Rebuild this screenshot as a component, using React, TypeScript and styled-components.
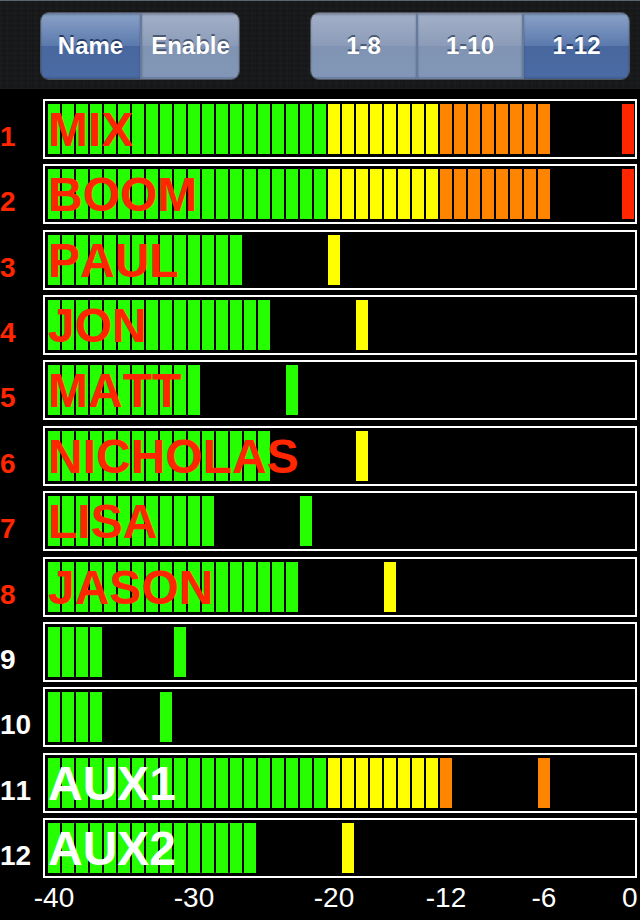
import React, { useState } from "react";
import styled, { createGlobalStyle } from "styled-components";

const GlobalStyle = createGlobalStyle`
  *, *::before, *::after { box-sizing: border-box; }
  body {
    margin: 0;
    background: #000;
    color: #fff;
    font-family: "Liberation Sans", Arial, Helvetica, sans-serif;
    font-kerning: none;
  }
`;

const SEGMENTS = 42;

const Page = styled.div`
  display: flex;
  flex-direction: column;
  min-height: 100vh;
`;

const Toolbar = styled.header`
  display: flex;
  justify-content: space-between;
  padding: 11px 10px 9px 40px;
  border-top: 1px solid #59666d;
  background:
    repeating-linear-gradient(90deg, rgba(255, 255, 255, 0.01) 0 1px, transparent 1px 4px, rgba(0, 0, 0, 0.1) 4px 5px, transparent 5px 7px),
    repeating-linear-gradient(0deg, rgba(255, 255, 255, 0.01) 0 1px, transparent 1px 3px, rgba(0, 0, 0, 0.08) 3px 4px, transparent 4px 5px),
    #18191b;
`;

const Segmented = styled.div<{ $columns: string }>`
  display: grid;
  grid-template-columns: ${(p) => p.$columns};
  height: 68px;
  overflow: hidden;
  border: 1px solid #50555e;
  border-radius: 9px;
`;

const SegmentButton = styled.button<{ $active: boolean }>`
  margin: 0;
  padding: 0;
  border: 0;
  color: #fff;
  font: bold 24px/28px "Liberation Sans", Arial, Helvetica, sans-serif;
  text-shadow: 0 -2px 0 ${(p) => (p.$active ? "rgba(16, 38, 78, 0.75)" : "rgba(44, 58, 84, 0.7)")};
  background: ${(p) =>
    p.$active
      ? "linear-gradient(#8ba3c8 0%, #5b79ad 50%, #48679f 50%, #4b6ba4 100%)"
      : "linear-gradient(#a4b0c8 0%, #8b9bb8 50%, #8093b3 50%, #8297b7 100%)"};
  box-shadow: inset 0 2px 2px rgba(30, 40, 60, 0.3), inset 0 -2px 1px rgba(40, 60, 100, 0.25);
  cursor: pointer;

  & + & {
    border-left: 2px solid ${(p) => (p.$active ? "#34548c" : "#667a9c")};
  }
`;

const Meters = styled.ol`
  flex: 1;
  display: flex;
  flex-direction: column;
  justify-content: space-between;
  gap: 5px;
  margin: 0;
  padding: 10px 3px 0 0;
  list-style: none;
`;

const MeterRow = styled.li<{ $armed: boolean }>`
  display: grid;
  grid-template-columns: 43px minmax(0, 1fr);
  grid-template-rows: 60px;
  color: ${(p) => (p.$armed ? "#ff2600" : "#fff")};
`;

const ChannelNumber = styled.span`
  padding-top: 22px;
  font-size: 28px;
  line-height: 32px;
  font-weight: bold;
`;

const Track = styled.div`
  display: grid;
  grid-template-rows: 50px;
  padding: 3px 1px 3px 3px;
  border: 2px solid #fff;
  background: #000;
`;

const Bars = styled.div`
  grid-area: 1 / 1;
  display: grid;
  grid-template-columns: repeat(${SEGMENTS}, minmax(0, 1fr));
  gap: 2px;
`;

const Bar = styled.span<{ $color: string }>`
  background: ${(p) => p.$color};
`;

const ChannelName = styled.span`
  grid-area: 1 / 1;
  font-size: 48px;
  line-height: 52px;
  font-weight: bold;
  white-space: nowrap;
`;

const Scale = styled.footer`
  display: grid;
  grid-template-columns: repeat(${SEGMENTS}, minmax(0, 1fr));
  column-gap: 2px;
  padding: 4px 6px 6px 48px;
  font-size: 28px;
  line-height: 32px;
`;

const Tick = styled.span<{ $at: number }>`
  grid-row: 1;
  grid-column: ${(p) => p.$at + 1};
  justify-self: ${(p) => (p.$at === SEGMENTS - 1 ? "start" : "center")};
  white-space: nowrap;
`;

type Channel = { name: string; level: number; peak: number; armed: boolean };

const channels: Channel[] = [
  { name: "MIX", level: 36, peak: 41, armed: true },
  { name: "BOOM", level: 36, peak: 41, armed: true },
  { name: "PAUL", level: 14, peak: 20, armed: true },
  { name: "JON", level: 16, peak: 22, armed: true },
  { name: "MATT", level: 11, peak: 17, armed: true },
  { name: "NICHOLAS", level: 16, peak: 22, armed: true },
  { name: "LISA", level: 12, peak: 18, armed: true },
  { name: "JASON", level: 18, peak: 24, armed: true },
  { name: "", level: 4, peak: 9, armed: false },
  { name: "", level: 4, peak: 8, armed: false },
  { name: "AUX1", level: 29, peak: 35, armed: false },
  { name: "AUX2", level: 15, peak: 21, armed: false },
];

const ticks = [
  { label: "-40", at: 0 },
  { label: "-30", at: 10 },
  { label: "-20", at: 20 },
  { label: "-12", at: 28 },
  { label: "-6", at: 35 },
  { label: "0", at: 41 },
];

function segmentColor(index: number): string {
  if (index < 20) return "#26ff00";
  if (index < 28) return "#ffff00";
  if (index < 40) return "#ff8400";
  return "#ff2600";
}

function SegmentedControl({ label, options, initial, columns }: {
  label: string;
  options: string[];
  initial: string;
  columns: string;
}) {
  const [selected, setSelected] = useState(initial);
  return (
    <Segmented role="group" aria-label={label} $columns={columns}>
      {options.map((option) => (
        <SegmentButton
          key={option}
          type="button"
          aria-pressed={option === selected}
          $active={option === selected}
          onClick={() => setSelected(option)}
        >
          {option}
        </SegmentButton>
      ))}
    </Segmented>
  );
}

function Meter({ channel, number }: { channel: Channel; number: number }) {
  return (
    <MeterRow $armed={channel.armed}>
      <ChannelNumber>{number}</ChannelNumber>
      <Track>
        <Bars>
          {Array.from({ length: SEGMENTS }, (_, i) => (
            <Bar
              key={i}
              $color={i < channel.level || i === channel.peak ? segmentColor(i) : "transparent"}
            />
          ))}
        </Bars>
        {channel.name && <ChannelName>{channel.name}</ChannelName>}
      </Track>
    </MeterRow>
  );
}

export default function App() {
  return (
    <Page>
      <GlobalStyle />
      <Toolbar>
        <SegmentedControl label="Mode" options={["Name", "Enable"]} initial="Name" columns="99px 99px" />
        <SegmentedControl
          label="Channels"
          options={["1-8", "1-10", "1-12"]}
          initial="1-12"
          columns="105px 106px 107px"
        />
      </Toolbar>
      <Meters>
        {channels.map((channel, i) => (
          <Meter key={i} channel={channel} number={i + 1} />
        ))}
      </Meters>
      <Scale>
        {ticks.map((tick) => (
          <Tick key={tick.label} $at={tick.at}>{tick.label}</Tick>
        ))}
      </Scale>
    </Page>
  );
}
